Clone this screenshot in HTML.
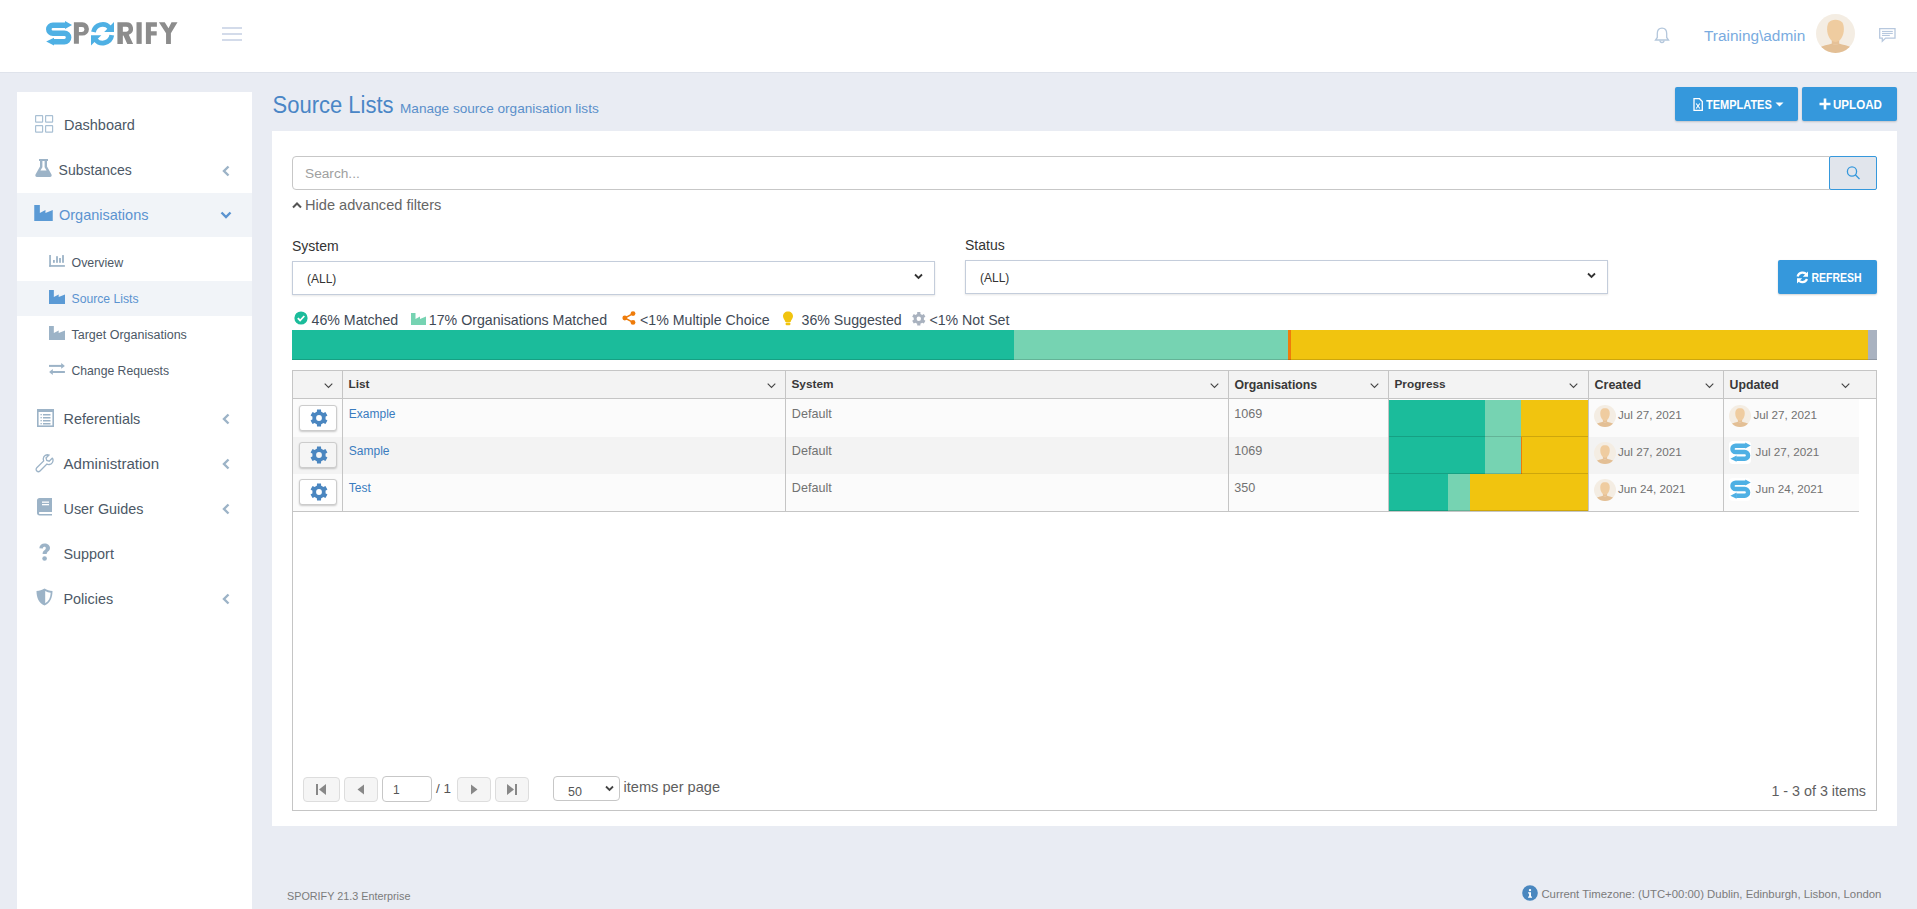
<!DOCTYPE html>
<html><head><meta charset="utf-8"><title>Source Lists</title>
<style>
html,body{margin:0;padding:0;width:1917px;height:909px;overflow:hidden;background:#e9ecf3;font-family:"Liberation Sans", sans-serif;}
div,svg{box-sizing:border-box;}
</style></head><body>
<div style="position:absolute;left:0px;top:0px;width:1917px;height:72px;background:#fff"></div><div style="position:absolute;left:0px;top:72px;width:1917px;height:1px;background:#dfe3eb"></div><svg style="position:absolute;left:46px;top:21px;" width="132" height="26" viewBox="0 0 132 26">
<path d="M20.5 4.2 H6.85 A4.05 4.05 0 0 0 6.85 12.3 H18.4 A4.2 4.2 0 0 1 18.4 20.7 H7.5" fill="none" stroke="#4eb0e4" stroke-width="5.6"/>
<polygon points="19,0.1 26,4.1 19,7.9" fill="#4eb0e4"/>
<polygon points="8,16.7 0.2,20.6 8,24.5" fill="#4eb0e4"/>
<path fill-rule="evenodd" fill="#8c8c8c" d="M27.9 1.3 H36.3 A6.65 6.65 0 0 1 36.3 14.6 H32.9 V22.8 H27.9 Z M32.9 6 V10.9 H36 A2.45 2.45 0 0 0 36 6 Z"/>
<path d="M47.47 10.93 A9.3 9.3 0 0 1 63.7 6.7" fill="none" stroke="#4eb0e4" stroke-width="4.8"/>
<polygon points="68,1 68,10.9 58.2,10.9" fill="#4eb0e4"/>
<path d="M65.78 14.2 A9.3 9.3 0 0 1 49.48 18.68" fill="none" stroke="#4eb0e4" stroke-width="4.8"/>
<polygon points="45,14.2 45,24.6 55.3,14.2" fill="#4eb0e4"/>
<path fill-rule="evenodd" fill="#8c8c8c" d="M71.4 1.2 H80.5 A6.5 6.5 0 0 1 82.8 13.8 L87.1 22.9 H81.3 L77.4 14.6 H76.85 V22.9 H71.4 Z M76.85 5.85 V10.7 H80.3 A2.4 2.4 0 0 0 80.3 5.85 Z"/>
<rect x="90.5" y="1.2" width="5.2" height="21.7" fill="#8c8c8c"/>
<path fill="#8c8c8c" d="M99.9 1.2 H110.9 V5.85 H104.9 V10.15 H110.7 V14.45 H104.9 V22.9 H99.9 Z"/>
<path fill="#8c8c8c" d="M112.95 1.2 H118.75 L122.5 7.35 L125.5 1.2 H131.5 L124.9 12.2 V22.9 H120.06 V12.2 Z"/>
</svg><div style="position:absolute;left:222px;top:27px;width:20px;height:2px;background:#d3dbea"></div><div style="position:absolute;left:222px;top:33px;width:20px;height:2px;background:#d3dbea"></div><div style="position:absolute;left:222px;top:39px;width:20px;height:2px;background:#d3dbea"></div><svg style="position:absolute;left:1653px;top:26px;" width="18" height="18" viewBox="0 0 18 18"><path d="M9 2.2 C5.6 2.2 4.3 5 4.3 7.6 V11.5 L2.5 14 H15.5 L13.7 11.5 V7.6 C13.7 5 12.4 2.2 9 2.2 Z" fill="none" stroke="#b4c7dc" stroke-width="1.3"/><path d="M7 14.5 A2 2 0 0 0 11 14.5" fill="none" stroke="#b4c7dc" stroke-width="1.3"/></svg><div style="position:absolute;left:1704px;top:27.56px;font-size:15.4px;line-height:15.4px;color:#79abe0;font-weight:400;white-space:nowrap;">Training\admin</div><svg style="position:absolute;left:1816px;top:14px;" width="39" height="39" viewBox="0 0 40 40"><clipPath id="c181614"><circle cx="20" cy="20" r="20"/></clipPath>
<g clip-path="url(#c181614)"><rect width="40" height="40" fill="#f4ede3"/>
<path d="M2 35 C7 32.3 12.5 31.6 16.5 30.3 C18 31.6 22 31.6 23.5 30.3 C27.5 31.6 33 32.3 38 35 L38 40 H2 Z" fill="#e3bf95"/>
<path d="M16.2 25 H23.8 V30.4 C22 31.8 18 31.8 16.2 30.4 Z" fill="#e6c197"/>
<path d="M20 6 C13.6 6 11.4 9.6 11.4 15.6 C11.4 21.6 14.6 28.6 20 28.6 C25.4 28.6 28.6 21.6 28.6 15.6 C28.6 9.6 26.4 6 20 6 Z" fill="#efcca0"/></g></svg><svg style="position:absolute;left:1878px;top:27px;" width="20" height="17" viewBox="0 0 20 17"><path d="M1.7 1.7 H17 V11.1 H7.6 L4.3 14.3 V11.1 H1.7 Z" fill="none" stroke="#b7c8de" stroke-width="1.3"/><rect x="4" y="3.9" width="10.8" height="1.1" fill="#b7c8de"/><rect x="4" y="5.9" width="10.8" height="1.1" fill="#b7c8de"/><rect x="4" y="7.9" width="7.8" height="1.1" fill="#b7c8de"/></svg><div style="position:absolute;left:17px;top:92px;width:235px;height:817px;background:#fff"></div><div style="position:absolute;left:17px;top:193px;width:235px;height:44px;background:#f1f4f8"></div><div style="position:absolute;left:17px;top:281px;width:235px;height:35px;background:#f1f4f8"></div><svg style="position:absolute;left:35px;top:115px;" width="19" height="19" viewBox="0 0 19 19"><rect x="0.6" y="0.6" width="7" height="6.6" fill="none" stroke="#a9c0d4" stroke-width="1.2" rx="0.5"/><rect x="0.6" y="10.6" width="7" height="6.6" fill="none" stroke="#a9c0d4" stroke-width="1.2" rx="0.5"/><rect x="10.6" y="0.6" width="7" height="6.6" fill="none" stroke="#a9c0d4" stroke-width="1.2" rx="0.5"/><rect x="10.6" y="10.6" width="7" height="6.6" fill="none" stroke="#a9c0d4" stroke-width="1.2" rx="0.5"/></svg><div style="position:absolute;left:64px;top:118.03px;font-size:14.5px;line-height:14.5px;color:#4c5866;font-weight:400;white-space:nowrap;">Dashboard</div><svg style="position:absolute;left:35px;top:158px;" width="17" height="20" viewBox="0 0 17 20"><path d="M4 1 H13 V3 H12 V8.5 L16.5 16.5 C17 17.8 16.4 19 15 19 H2 C0.6 19 0 17.8 0.5 16.5 L5 8.5 V3 H4 Z" fill="#9cb3c7"/><path d="M7.4 3 V9.2 L5.4 12.6 H11.6 L9.6 9.2 V3 Z" fill="#fff"/></svg><div style="position:absolute;left:58.6px;top:162.65px;font-size:14.0px;line-height:14.0px;color:#4c5866;font-weight:400;white-space:nowrap;">Substances</div><svg style="position:absolute;left:221px;top:165px;" width="10" height="12" viewBox="0 0 10 12"><path d="M7.5 1.5 L3 6 L7.5 10.5" fill="none" stroke="#9cb3c7" stroke-width="2.4"/></svg><svg style="position:absolute;left:34px;top:205px;" width="19" height="16" viewBox="0 0 18.5 16"><path d="M0 0 H5.6 V7.9 L11.2 5 V7.9 L18.5 5 V16 H0 Z" fill="#5b9ad5"/></svg><div style="position:absolute;left:59px;top:207.63px;font-size:14.5px;line-height:14.5px;color:#5b93d0;font-weight:400;white-space:nowrap;">Organisations</div><svg style="position:absolute;left:220px;top:210px;" width="12" height="10" viewBox="0 0 12 10"><path d="M1.5 2.5 L6 7 L10.5 2.5" fill="none" stroke="#5b93d0" stroke-width="2.4"/></svg><svg style="position:absolute;left:49px;top:255px;" width="16" height="12" viewBox="0 0 16 12"><rect x="0.2" y="0" width="1.7" height="11.8" fill="#9cb3c7"/><rect x="0.2" y="10.1" width="15.7" height="1.7" fill="#9cb3c7"/><rect x="4" y="5" width="1.8" height="2.8" fill="#9cb3c7"/><rect x="7.1" y="1.2" width="1.8" height="6.6" fill="#9cb3c7"/><rect x="10.1" y="3" width="1.8" height="4.8" fill="#9cb3c7"/><rect x="13.1" y="0.1" width="1.8" height="7.7" fill="#9cb3c7"/></svg><div style="position:absolute;left:71.5px;top:256.50px;font-size:12.4px;line-height:12.4px;color:#4c5866;font-weight:400;white-space:nowrap;">Overview</div><svg style="position:absolute;left:49px;top:290px;" width="16" height="14" viewBox="0 0 18.5 16"><path d="M0 0 H5.6 V7.9 L11.2 5 V7.9 L18.5 5 V16 H0 Z" fill="#5b9ad5"/></svg><div style="position:absolute;left:71.5px;top:293.17px;font-size:12.2px;line-height:12.2px;color:#5b93d0;font-weight:400;white-space:nowrap;">Source Lists</div><svg style="position:absolute;left:49px;top:326px;" width="16" height="14" viewBox="0 0 18.5 16"><path d="M0 0 H5.6 V7.9 L11.2 5 V7.9 L18.5 5 V16 H0 Z" fill="#9cb3c7"/></svg><div style="position:absolute;left:71.5px;top:329.42px;font-size:12.5px;line-height:12.5px;color:#4c5866;font-weight:400;white-space:nowrap;">Target Organisations</div><svg style="position:absolute;left:49px;top:362px;" width="16" height="13" viewBox="0 0 16 13"><rect x="0" y="2.9" width="13" height="2" fill="#9cb3c7"/><path d="M12.2 1 L15.9 3.9 L12.2 6.8 Z" fill="#9cb3c7"/><rect x="3" y="9" width="12.9" height="2" fill="#9cb3c7"/><path d="M3.8 7.1 L0.1 10 L3.8 12.9 Z" fill="#9cb3c7"/></svg><div style="position:absolute;left:71.5px;top:364.67px;font-size:12.2px;line-height:12.2px;color:#4c5866;font-weight:400;white-space:nowrap;">Change Requests</div><svg style="position:absolute;left:37px;top:409px;" width="17" height="18" viewBox="0 0 17 18"><rect x="0.8" y="0.8" width="15.4" height="16.4" fill="none" stroke="#9cb3c7" stroke-width="1.6"/><rect x="0" y="0" width="17" height="3" fill="#9cb3c7"/><rect x="3.5" y="5" width="1.3" height="1.3" fill="#9cb3c7"/><rect x="6" y="5" width="7.5" height="1.5" fill="#9cb3c7"/><rect x="3.5" y="8" width="1.3" height="1.3" fill="#9cb3c7"/><rect x="6" y="8" width="7.5" height="1.5" fill="#9cb3c7"/><rect x="3.5" y="11" width="1.3" height="1.3" fill="#9cb3c7"/><rect x="6" y="11" width="7.5" height="1.5" fill="#9cb3c7"/><rect x="3.5" y="14" width="1.3" height="1.3" fill="#9cb3c7"/><rect x="6" y="14" width="7.5" height="1.5" fill="#9cb3c7"/></svg><div style="position:absolute;left:63.5px;top:411.81px;font-size:14.4px;line-height:14.4px;color:#4c5866;font-weight:400;white-space:nowrap;">Referentials</div><svg style="position:absolute;left:221px;top:413px;" width="10" height="12" viewBox="0 0 10 12"><path d="M7.5 1.5 L3 6 L7.5 10.5" fill="none" stroke="#9cb3c7" stroke-width="2.4"/></svg><svg style="position:absolute;left:35px;top:454px;" width="19" height="19" viewBox="0 0 19 19"><path d="M17.2 4.2 L14.2 7.2 L11.8 6.4 L11 4 L14 1 C11.5 0.2 8.6 1.6 8.3 4.5 C8.2 5.4 8.4 6.2 8.7 6.9 L1.8 13.8 C0.9 14.7 0.9 16.1 1.8 17 C2.7 17.9 4.1 17.9 5 17 L11.9 10.1 C12.6 10.4 13.4 10.6 14.3 10.5 C17.2 10.2 18.6 7.3 17.8 4.8 Z" fill="none" stroke="#9cb3c7" stroke-width="1.3"/></svg><div style="position:absolute;left:63.5px;top:456.22px;font-size:15.1px;line-height:15.1px;color:#4c5866;font-weight:400;white-space:nowrap;">Administration</div><svg style="position:absolute;left:221px;top:458px;" width="10" height="12" viewBox="0 0 10 12"><path d="M7.5 1.5 L3 6 L7.5 10.5" fill="none" stroke="#9cb3c7" stroke-width="2.4"/></svg><svg style="position:absolute;left:37px;top:498px;" width="16" height="18" viewBox="0 0 16 18"><path d="M2.5 0 H15 V14 H3 C2.2 14 2 14.5 2 15 C2 15.5 2.2 16 3 16 H15 V17.5 H2.5 C1 17.5 0 16.5 0 15 V2.5 C0 1 1 0 2.5 0 Z" fill="#9cb3c7"/><rect x="5" y="3.5" width="7" height="1.3" fill="#fff"/><rect x="5" y="6" width="7" height="1.3" fill="#fff"/></svg><div style="position:absolute;left:63.5px;top:501.81px;font-size:14.4px;line-height:14.4px;color:#4c5866;font-weight:400;white-space:nowrap;">User Guides</div><svg style="position:absolute;left:221px;top:503px;" width="10" height="12" viewBox="0 0 10 12"><path d="M7.5 1.5 L3 6 L7.5 10.5" fill="none" stroke="#9cb3c7" stroke-width="2.4"/></svg><svg style="position:absolute;left:38px;top:543px;" width="13" height="18" viewBox="0 0 13 18"><path d="M1.3 5.2 C1.5 2.2 3.7 0.5 6.6 0.5 C9.6 0.5 12 2.3 12 5 C12 8.2 8.7 8.5 8.7 11 H4.6 C4.6 7.3 7.8 7 7.8 5.2 C7.8 4.3 7.2 3.8 6.4 3.8 C5.4 3.8 4.9 4.5 4.8 5.6 Z" fill="#9cb3c7"/><circle cx="6.6" cy="15.5" r="2.3" fill="#9cb3c7"/></svg><div style="position:absolute;left:63.5px;top:546.81px;font-size:14.4px;line-height:14.4px;color:#4c5866;font-weight:400;white-space:nowrap;">Support</div><svg style="position:absolute;left:36px;top:588px;" width="17" height="18" viewBox="0 0 17 18"><path d="M8.5 0.5 C11 2 13.5 2.8 16.5 3 C16.5 10 14 15 8.5 17.5 C3 15 0.5 10 0.5 3 C3.5 2.8 6 2 8.5 0.5 Z" fill="#9cb3c7"/><path d="M9.2 3 C11 4 12.7 4.6 14.7 4.8 C14.5 10 12.7 13.5 9.2 15.3 Z" fill="#fff"/></svg><div style="position:absolute;left:63.5px;top:591.81px;font-size:14.4px;line-height:14.4px;color:#4c5866;font-weight:400;white-space:nowrap;">Policies</div><svg style="position:absolute;left:221px;top:593px;" width="10" height="12" viewBox="0 0 10 12"><path d="M7.5 1.5 L3 6 L7.5 10.5" fill="none" stroke="#9cb3c7" stroke-width="2.4"/></svg><div style="position:absolute;left:272.5px;top:94.88px;font-size:22px;line-height:22px;color:#4a86c6;font-weight:400;white-space:nowrap;transform:scaleY(1.1);transform-origin:0 84.65%">Source Lists</div><div style="position:absolute;left:400px;top:101.69px;font-size:13.6px;line-height:13.6px;color:#5a8fca;font-weight:400;white-space:nowrap;">Manage source organisation lists</div><div style="position:absolute;left:1675px;top:87px;width:123px;height:34px;background:#3598dc;border-radius:2px;box-shadow:0 1px 2px rgba(0,0,0,.18)"></div><div style="position:absolute;left:1802px;top:87px;width:95px;height:34px;background:#3598dc;border-radius:2px;box-shadow:0 1px 2px rgba(0,0,0,.18)"></div><svg style="position:absolute;left:1693px;top:98px;" width="10" height="13" viewBox="0 0 10 13"><path d="M1 0.7 H6.5 L9.3 3.5 V12.3 H1 Z" fill="none" stroke="#fff" stroke-width="1.3"/><path d="M3.2 5.5 L6.8 10.5 M6.8 5.5 L3.2 10.5" stroke="#fff" stroke-width="1.1"/></svg><div style="position:absolute;left:1706px;top:100.09px;font-size:11.0px;line-height:11.0px;color:#fff;font-weight:700;white-space:nowrap;transform:scaleY(1.13);transform-origin:0 84.65%">TEMPLATES</div><svg style="position:absolute;left:1775px;top:102px;" width="9" height="6" viewBox="0 0 9 6"><path d="M0.5 0.5 H8.5 L4.5 4.5 Z" fill="#fff"/></svg><svg style="position:absolute;left:1819px;top:98px;" width="12" height="12" viewBox="0 0 12 12"><path d="M6 0.5 V11.5 M0.5 6 H11.5" stroke="#fff" stroke-width="2.6"/></svg><div style="position:absolute;left:1833px;top:98.98px;font-size:11.6px;line-height:11.6px;color:#fff;font-weight:700;white-space:nowrap;transform:scaleY(1.13);transform-origin:0 84.65%">UPLOAD</div><div style="position:absolute;left:272px;top:131px;width:1625px;height:695px;background:#fff"></div><div style="position:absolute;left:292px;top:156px;width:1538px;height:34px;border:1px solid #c7c7c7;border-radius:4px 0 0 4px;background:#fff"></div><div style="position:absolute;left:1829px;top:156px;width:48px;height:34px;border:1px solid #3598dc;border-radius:2px;background:#e1e5ec"></div><svg style="position:absolute;left:1846px;top:166px;" width="15" height="15" viewBox="0 0 15 15"><circle cx="6" cy="5.5" r="4.6" fill="none" stroke="#3598dc" stroke-width="1.3"/><path d="M9.3 8.8 L13.5 13" stroke="#3598dc" stroke-width="1.3"/></svg><div style="position:absolute;left:305px;top:167.40px;font-size:13.7px;line-height:13.7px;color:#a0a0a0;font-weight:400;white-space:nowrap;">Search...</div><svg style="position:absolute;left:292px;top:201px;" width="10" height="8" viewBox="0 0 10 8"><path d="M1 6.5 L5 2.5 L9 6.5" fill="none" stroke="#555" stroke-width="2"/></svg><div style="position:absolute;left:305px;top:198.34px;font-size:14.6px;line-height:14.6px;color:#666;font-weight:400;white-space:nowrap;">Hide advanced filters</div><div style="position:absolute;left:292px;top:239.15px;font-size:14px;line-height:14px;color:#333;font-weight:400;white-space:nowrap;">System</div><div style="position:absolute;left:292px;top:261px;width:643px;height:34px;border:1px solid #c4cddb;background:#fff;box-shadow:0 1px 2px rgba(0,0,0,.1)"></div><div style="position:absolute;left:307px;top:272.84px;font-size:12px;line-height:12px;color:#333;font-weight:400;white-space:nowrap;">(ALL)</div><svg style="position:absolute;left:914px;top:273px;" width="9" height="7" viewBox="0 0 9 7"><path d="M1 1.5 L4.5 5 L8 1.5" fill="none" stroke="#333" stroke-width="1.8"/></svg><div style="position:absolute;left:965px;top:238.35px;font-size:14px;line-height:14px;color:#333;font-weight:400;white-space:nowrap;">Status</div><div style="position:absolute;left:965px;top:260px;width:643px;height:34px;border:1px solid #c4cddb;background:#fff;box-shadow:0 1px 2px rgba(0,0,0,.1)"></div><div style="position:absolute;left:980px;top:272.34px;font-size:12px;line-height:12px;color:#333;font-weight:400;white-space:nowrap;">(ALL)</div><svg style="position:absolute;left:1587px;top:272px;" width="9" height="7" viewBox="0 0 9 7"><path d="M1 1.5 L4.5 5 L8 1.5" fill="none" stroke="#333" stroke-width="1.8"/></svg><div style="position:absolute;left:1778px;top:260px;width:99px;height:34px;background:#3598dc;border-radius:2px;box-shadow:0 1px 2px rgba(0,0,0,.18)"></div><svg style="position:absolute;left:1795.5px;top:271px;" width="13" height="13" viewBox="0 0 13 13"><path d="M11 4.5 A5 5 0 0 0 1.6 5.6" fill="none" stroke="#fff" stroke-width="2.2"/><path d="M12 0.5 V5.8 H6.8 Z" fill="#fff"/><path d="M2 8.5 A5 5 0 0 0 11 8" fill="none" stroke="#fff" stroke-width="2.2"/><path d="M1 12.5 V7.2 H6.2 Z" fill="#fff"/></svg><div style="position:absolute;left:1811.5px;top:273.11px;font-size:10.5px;line-height:10.5px;color:#fff;font-weight:700;white-space:nowrap;transform:scaleY(1.13);transform-origin:0 84.65%">REFRESH</div><svg style="position:absolute;left:294px;top:311px;" width="14" height="14" viewBox="0 0 14 14"><circle cx="7" cy="7" r="6.6" fill="#1bbc9b"/><path d="M3.8 7.2 L6.1 9.5 L10.3 5" fill="none" stroke="#fff" stroke-width="1.8"/></svg><div style="position:absolute;left:311.5px;top:312.98px;font-size:14.2px;line-height:14.2px;color:#3f4a56;font-weight:400;white-space:nowrap;">46% Matched</div><svg style="position:absolute;left:411px;top:313px;" width="15" height="12" viewBox="0 0 15 12"><path d="M0 0 H4.5 V6 L9 3.5 V6 L15 3.5 V12 H0 Z" fill="#76d3b2"/></svg><div style="position:absolute;left:428.8px;top:312.98px;font-size:14.2px;line-height:14.2px;color:#3f4a56;font-weight:400;white-space:nowrap;">17% Organisations Matched</div><svg style="position:absolute;left:622px;top:311px;" width="14" height="14" viewBox="0 0 14 14"><circle cx="11" cy="2.6" r="2.4" fill="#ee7c0b"/><circle cx="2.8" cy="7" r="2.4" fill="#ee7c0b"/><circle cx="11" cy="11.4" r="2.4" fill="#ee7c0b"/><path d="M11 2.6 L2.8 7 L11 11.4" fill="none" stroke="#ee7c0b" stroke-width="1.5"/></svg><div style="position:absolute;left:640px;top:312.98px;font-size:14.2px;line-height:14.2px;color:#3f4a56;font-weight:400;white-space:nowrap;">&lt;1% Multiple Choice</div><svg style="position:absolute;left:782px;top:311px;" width="12" height="15" viewBox="0 0 12 15"><path d="M6 0.5 C9 0.5 11 2.6 11 5.3 C11 7.7 9 8.8 8.6 11 H3.4 C3 8.8 1 7.7 1 5.3 C1 2.6 3 0.5 6 0.5 Z" fill="#f1c40f"/><rect x="3.6" y="11.6" width="4.8" height="2.6" rx="1" fill="#f1c40f"/></svg><div style="position:absolute;left:801.5px;top:312.98px;font-size:14.2px;line-height:14.2px;color:#3f4a56;font-weight:400;white-space:nowrap;">36% Suggested</div><svg style="position:absolute;left:911px;top:311px;" width="15" height="15" viewBox="0 0 15 15"><path fill-rule="evenodd" fill="#a9b2bf" d="M6.14 2.98 L6.25 1.08 L9.35 1.08 L9.46 2.98 L9.91 3.16 L10.35 3.38 L10.76 3.65 L11.15 3.95 L12.85 3.09 L14.40 5.78 L12.81 6.83 L12.88 7.31 L12.90 7.80 L12.88 8.29 L12.81 8.77 L14.40 9.82 L12.85 12.51 L11.15 11.65 L10.76 11.95 L10.35 12.22 L9.91 12.44 L9.46 12.62 L9.35 14.52 L6.25 14.52 L6.14 12.62 L5.69 12.44 L5.25 12.22 L4.84 11.95 L4.45 11.65 L2.75 12.51 L1.20 9.82 L2.79 8.77 L2.72 8.29 L2.70 7.80 L2.72 7.31 L2.79 6.83 L1.20 5.78 L2.75 3.09 L4.45 3.95 L4.84 3.65 L5.25 3.38 L5.69 3.16 Z M7.80 5.60 A2.2 2.2 0 1 0 7.80 10.00 A2.2 2.2 0 1 0 7.80 5.60 Z"/></svg><div style="position:absolute;left:929.4px;top:312.98px;font-size:14.2px;line-height:14.2px;color:#3f4a56;font-weight:400;white-space:nowrap;">&lt;1% Not Set</div><div style="position:absolute;left:292px;top:330px;width:722px;height:30px;background:#1bbc9b"></div><div style="position:absolute;left:1014px;top:330px;width:274px;height:30px;background:#76d3b2"></div><div style="position:absolute;left:1288px;top:330px;width:3px;height:30px;background:#ee7c0b"></div><div style="position:absolute;left:1291px;top:330px;width:577px;height:30px;background:#f1c40f"></div><div style="position:absolute;left:1868px;top:330px;width:9px;height:30px;background:#a9b2c0"></div><div style="position:absolute;left:292px;top:359px;width:1585px;height:1px;background:rgba(0,0,0,.15)"></div><div style="position:absolute;left:292px;top:370px;width:1585px;height:441px;border:1px solid #c5c5c5;background:#fff"></div><div style="position:absolute;left:293px;top:371px;width:1583px;height:27px;background:#f3f3f3"></div><div style="position:absolute;left:293px;top:398px;width:1583px;height:1px;background:#c5c5c5"></div><div style="position:absolute;left:342px;top:371px;width:1px;height:27px;background:#c5c5c5"></div><div style="position:absolute;left:785px;top:371px;width:1px;height:27px;background:#c5c5c5"></div><div style="position:absolute;left:1228px;top:371px;width:1px;height:27px;background:#c5c5c5"></div><div style="position:absolute;left:1388px;top:371px;width:1px;height:27px;background:#c5c5c5"></div><div style="position:absolute;left:1588px;top:371px;width:1px;height:27px;background:#c5c5c5"></div><div style="position:absolute;left:1723px;top:371px;width:1px;height:27px;background:#c5c5c5"></div><div style="position:absolute;left:348.5px;top:379.21px;font-size:11.8px;line-height:11.8px;color:#383838;font-weight:700;white-space:nowrap;">List</div><div style="position:absolute;left:791.5px;top:379.21px;font-size:11.8px;line-height:11.8px;color:#383838;font-weight:700;white-space:nowrap;">System</div><div style="position:absolute;left:1234.5px;top:378.79px;font-size:12.3px;line-height:12.3px;color:#383838;font-weight:700;white-space:nowrap;">Organisations</div><div style="position:absolute;left:1394.5px;top:379.21px;font-size:11.8px;line-height:11.8px;color:#383838;font-weight:700;white-space:nowrap;">Progress</div><div style="position:absolute;left:1594.5px;top:378.62px;font-size:12.5px;line-height:12.5px;color:#383838;font-weight:700;white-space:nowrap;">Created</div><div style="position:absolute;left:1729.5px;top:378.79px;font-size:12.3px;line-height:12.3px;color:#383838;font-weight:700;white-space:nowrap;">Updated</div><svg style="position:absolute;left:323.5px;top:383px;" width="9" height="6" viewBox="0 0 9 6"><path d="M0.7 0.7 L4.5 4.5 L8.3 0.7" fill="none" stroke="#444" stroke-width="1.1"/></svg><svg style="position:absolute;left:766.5px;top:383px;" width="9" height="6" viewBox="0 0 9 6"><path d="M0.7 0.7 L4.5 4.5 L8.3 0.7" fill="none" stroke="#444" stroke-width="1.1"/></svg><svg style="position:absolute;left:1209.5px;top:383px;" width="9" height="6" viewBox="0 0 9 6"><path d="M0.7 0.7 L4.5 4.5 L8.3 0.7" fill="none" stroke="#444" stroke-width="1.1"/></svg><svg style="position:absolute;left:1369.5px;top:383px;" width="9" height="6" viewBox="0 0 9 6"><path d="M0.7 0.7 L4.5 4.5 L8.3 0.7" fill="none" stroke="#444" stroke-width="1.1"/></svg><svg style="position:absolute;left:1569px;top:383px;" width="9" height="6" viewBox="0 0 9 6"><path d="M0.7 0.7 L4.5 4.5 L8.3 0.7" fill="none" stroke="#444" stroke-width="1.1"/></svg><svg style="position:absolute;left:1704.5px;top:383px;" width="9" height="6" viewBox="0 0 9 6"><path d="M0.7 0.7 L4.5 4.5 L8.3 0.7" fill="none" stroke="#444" stroke-width="1.1"/></svg><svg style="position:absolute;left:1840.5px;top:383px;" width="9" height="6" viewBox="0 0 9 6"><path d="M0.7 0.7 L4.5 4.5 L8.3 0.7" fill="none" stroke="#444" stroke-width="1.1"/></svg><div style="position:absolute;left:293px;top:399px;width:1566px;height:38px;background:#fbfbfb"></div><div style="position:absolute;left:342px;top:399px;width:1px;height:38px;background:#c5c5c5"></div><div style="position:absolute;left:785px;top:399px;width:1px;height:38px;background:#c5c5c5"></div><div style="position:absolute;left:1228px;top:399px;width:1px;height:38px;background:#c5c5c5"></div><div style="position:absolute;left:1388px;top:399px;width:1px;height:38px;background:#c5c5c5"></div><div style="position:absolute;left:1588px;top:399px;width:1px;height:38px;background:#c5c5c5"></div><div style="position:absolute;left:1723px;top:399px;width:1px;height:38px;background:#c5c5c5"></div><div style="position:absolute;left:299px;top:405px;width:38px;height:26px;background:#fff;border:1px solid #ccc;border-radius:3px;box-shadow:0 1px 2px rgba(0,0,0,.2)"></div><svg style="position:absolute;left:310px;top:409px;" width="18" height="18" viewBox="0 0 18 18"><path fill-rule="evenodd" fill="#4a86c0" d="M6.85 2.76 L7.02 0.43 L10.98 0.43 L11.15 2.76 L11.74 2.99 L12.30 3.28 L12.83 3.63 L13.33 4.02 L15.44 3.00 L17.42 6.43 L15.48 7.74 L15.57 8.37 L15.60 9.00 L15.57 9.63 L15.48 10.26 L17.42 11.57 L15.44 15.00 L13.33 13.98 L12.83 14.37 L12.30 14.72 L11.74 15.01 L11.15 15.24 L10.98 17.57 L7.02 17.57 L6.85 15.24 L6.26 15.01 L5.70 14.72 L5.17 14.37 L4.67 13.98 L2.56 15.00 L0.58 11.57 L2.52 10.26 L2.43 9.63 L2.40 9.00 L2.43 8.37 L2.52 7.74 L0.58 6.43 L2.56 3.00 L4.67 4.02 L5.17 3.63 L5.70 3.28 L6.26 2.99 Z M9.00 6.10 A2.9 2.9 0 1 0 9.00 11.90 A2.9 2.9 0 1 0 9.00 6.10 Z"/></svg><div style="position:absolute;left:348.8px;top:407.64px;font-size:12px;line-height:12px;color:#3a7cbf;font-weight:400;white-space:nowrap;">Example</div><div style="position:absolute;left:791.8px;top:408.13px;font-size:12.6px;line-height:12.6px;color:#727272;font-weight:400;white-space:nowrap;">Default</div><div style="position:absolute;left:1234.3px;top:408.13px;font-size:12.6px;line-height:12.6px;color:#727272;font-weight:400;white-space:nowrap;">1069</div><div style="position:absolute;left:1389px;top:400px;width:96px;height:37px;background:#1bbc9b"></div><div style="position:absolute;left:1485px;top:400px;width:36px;height:37px;background:#76d3b2"></div><div style="position:absolute;left:1521px;top:400px;width:67px;height:37px;background:#f1c40f"></div><div style="position:absolute;left:1389px;top:436px;width:199px;height:1px;background:rgba(0,0,0,.15)"></div><svg style="position:absolute;left:1594px;top:405px;" width="22" height="22" viewBox="0 0 40 40"><clipPath id="c1594405"><circle cx="20" cy="20" r="20"/></clipPath>
<g clip-path="url(#c1594405)"><rect width="40" height="40" fill="#f4ede3"/>
<path d="M2 35 C7 32.3 12.5 31.6 16.5 30.3 C18 31.6 22 31.6 23.5 30.3 C27.5 31.6 33 32.3 38 35 L38 40 H2 Z" fill="#e3bf95"/>
<path d="M16.2 25 H23.8 V30.4 C22 31.8 18 31.8 16.2 30.4 Z" fill="#e6c197"/>
<path d="M20 6 C13.6 6 11.4 9.6 11.4 15.6 C11.4 21.6 14.6 28.6 20 28.6 C25.4 28.6 28.6 21.6 28.6 15.6 C28.6 9.6 26.4 6 20 6 Z" fill="#efcca0"/></g></svg><div style="position:absolute;left:1618px;top:409.30px;font-size:11.7px;line-height:11.7px;color:#727272;font-weight:400;white-space:nowrap;">Jul 27, 2021</div><svg style="position:absolute;left:1729px;top:405px;" width="22" height="22" viewBox="0 0 40 40"><clipPath id="c1729405"><circle cx="20" cy="20" r="20"/></clipPath>
<g clip-path="url(#c1729405)"><rect width="40" height="40" fill="#f4ede3"/>
<path d="M2 35 C7 32.3 12.5 31.6 16.5 30.3 C18 31.6 22 31.6 23.5 30.3 C27.5 31.6 33 32.3 38 35 L38 40 H2 Z" fill="#e3bf95"/>
<path d="M16.2 25 H23.8 V30.4 C22 31.8 18 31.8 16.2 30.4 Z" fill="#e6c197"/>
<path d="M20 6 C13.6 6 11.4 9.6 11.4 15.6 C11.4 21.6 14.6 28.6 20 28.6 C25.4 28.6 28.6 21.6 28.6 15.6 C28.6 9.6 26.4 6 20 6 Z" fill="#efcca0"/></g></svg><div style="position:absolute;left:1753.4px;top:409.30px;font-size:11.7px;line-height:11.7px;color:#727272;font-weight:400;white-space:nowrap;">Jul 27, 2021</div><div style="position:absolute;left:293px;top:437px;width:1566px;height:37px;background:#f3f3f3"></div><div style="position:absolute;left:342px;top:437px;width:1px;height:37px;background:#c5c5c5"></div><div style="position:absolute;left:785px;top:437px;width:1px;height:37px;background:#c5c5c5"></div><div style="position:absolute;left:1228px;top:437px;width:1px;height:37px;background:#c5c5c5"></div><div style="position:absolute;left:1388px;top:437px;width:1px;height:37px;background:#c5c5c5"></div><div style="position:absolute;left:1588px;top:437px;width:1px;height:37px;background:#c5c5c5"></div><div style="position:absolute;left:1723px;top:437px;width:1px;height:37px;background:#c5c5c5"></div><div style="position:absolute;left:299px;top:442px;width:38px;height:26px;background:#f5f5f5;border:1px solid #ccc;border-radius:3px;box-shadow:0 1px 2px rgba(0,0,0,.2)"></div><svg style="position:absolute;left:310px;top:446px;" width="18" height="18" viewBox="0 0 18 18"><path fill-rule="evenodd" fill="#4a86c0" d="M6.85 2.76 L7.02 0.43 L10.98 0.43 L11.15 2.76 L11.74 2.99 L12.30 3.28 L12.83 3.63 L13.33 4.02 L15.44 3.00 L17.42 6.43 L15.48 7.74 L15.57 8.37 L15.60 9.00 L15.57 9.63 L15.48 10.26 L17.42 11.57 L15.44 15.00 L13.33 13.98 L12.83 14.37 L12.30 14.72 L11.74 15.01 L11.15 15.24 L10.98 17.57 L7.02 17.57 L6.85 15.24 L6.26 15.01 L5.70 14.72 L5.17 14.37 L4.67 13.98 L2.56 15.00 L0.58 11.57 L2.52 10.26 L2.43 9.63 L2.40 9.00 L2.43 8.37 L2.52 7.74 L0.58 6.43 L2.56 3.00 L4.67 4.02 L5.17 3.63 L5.70 3.28 L6.26 2.99 Z M9.00 6.10 A2.9 2.9 0 1 0 9.00 11.90 A2.9 2.9 0 1 0 9.00 6.10 Z"/></svg><div style="position:absolute;left:348.8px;top:444.64px;font-size:12px;line-height:12px;color:#3a7cbf;font-weight:400;white-space:nowrap;">Sample</div><div style="position:absolute;left:791.8px;top:445.13px;font-size:12.6px;line-height:12.6px;color:#727272;font-weight:400;white-space:nowrap;">Default</div><div style="position:absolute;left:1234.3px;top:445.13px;font-size:12.6px;line-height:12.6px;color:#727272;font-weight:400;white-space:nowrap;">1069</div><div style="position:absolute;left:1389px;top:437px;width:96px;height:37px;background:#1bbc9b"></div><div style="position:absolute;left:1485px;top:437px;width:36px;height:37px;background:#76d3b2"></div><div style="position:absolute;left:1521px;top:437px;width:1px;height:37px;background:#ee7c0b"></div><div style="position:absolute;left:1522px;top:437px;width:66px;height:37px;background:#f1c40f"></div><div style="position:absolute;left:1389px;top:473px;width:199px;height:1px;background:rgba(0,0,0,.15)"></div><svg style="position:absolute;left:1594px;top:442px;" width="22" height="22" viewBox="0 0 40 40"><clipPath id="c1594442"><circle cx="20" cy="20" r="20"/></clipPath>
<g clip-path="url(#c1594442)"><rect width="40" height="40" fill="#f4ede3"/>
<path d="M2 35 C7 32.3 12.5 31.6 16.5 30.3 C18 31.6 22 31.6 23.5 30.3 C27.5 31.6 33 32.3 38 35 L38 40 H2 Z" fill="#e3bf95"/>
<path d="M16.2 25 H23.8 V30.4 C22 31.8 18 31.8 16.2 30.4 Z" fill="#e6c197"/>
<path d="M20 6 C13.6 6 11.4 9.6 11.4 15.6 C11.4 21.6 14.6 28.6 20 28.6 C25.4 28.6 28.6 21.6 28.6 15.6 C28.6 9.6 26.4 6 20 6 Z" fill="#efcca0"/></g></svg><div style="position:absolute;left:1618px;top:446.30px;font-size:11.7px;line-height:11.7px;color:#727272;font-weight:400;white-space:nowrap;">Jul 27, 2021</div><div style="position:absolute;left:1729px;top:441px;width:22px;height:23px;background:#fff;border-radius:4px"></div><svg style="position:absolute;left:1729.5px;top:442.2px;overflow:visible" width="21" height="20" viewBox="-0.3 -0.3 26.6 25"><path d="M20.5 4.2 H6.85 A4.05 4.05 0 0 0 6.85 12.3 H18.4 A4.2 4.2 0 0 1 18.4 20.7 H7.5" fill="none" stroke="#4eb0e4" stroke-width="5.6"/>
<polygon points="19,0.1 26,4.1 19,7.9" fill="#4eb0e4"/><polygon points="8,16.7 0.2,20.6 8,24.5" fill="#4eb0e4"/></svg><div style="position:absolute;left:1755.6px;top:446.30px;font-size:11.7px;line-height:11.7px;color:#727272;font-weight:400;white-space:nowrap;">Jul 27, 2021</div><div style="position:absolute;left:293px;top:474px;width:1566px;height:37px;background:#fbfbfb"></div><div style="position:absolute;left:292px;top:511px;width:1567px;height:1px;background:#c5c5c5"></div><div style="position:absolute;left:342px;top:474px;width:1px;height:37px;background:#c5c5c5"></div><div style="position:absolute;left:785px;top:474px;width:1px;height:37px;background:#c5c5c5"></div><div style="position:absolute;left:1228px;top:474px;width:1px;height:37px;background:#c5c5c5"></div><div style="position:absolute;left:1388px;top:474px;width:1px;height:37px;background:#c5c5c5"></div><div style="position:absolute;left:1588px;top:474px;width:1px;height:37px;background:#c5c5c5"></div><div style="position:absolute;left:1723px;top:474px;width:1px;height:37px;background:#c5c5c5"></div><div style="position:absolute;left:299px;top:479px;width:38px;height:26px;background:#fff;border:1px solid #ccc;border-radius:3px;box-shadow:0 1px 2px rgba(0,0,0,.2)"></div><svg style="position:absolute;left:310px;top:483px;" width="18" height="18" viewBox="0 0 18 18"><path fill-rule="evenodd" fill="#4a86c0" d="M6.85 2.76 L7.02 0.43 L10.98 0.43 L11.15 2.76 L11.74 2.99 L12.30 3.28 L12.83 3.63 L13.33 4.02 L15.44 3.00 L17.42 6.43 L15.48 7.74 L15.57 8.37 L15.60 9.00 L15.57 9.63 L15.48 10.26 L17.42 11.57 L15.44 15.00 L13.33 13.98 L12.83 14.37 L12.30 14.72 L11.74 15.01 L11.15 15.24 L10.98 17.57 L7.02 17.57 L6.85 15.24 L6.26 15.01 L5.70 14.72 L5.17 14.37 L4.67 13.98 L2.56 15.00 L0.58 11.57 L2.52 10.26 L2.43 9.63 L2.40 9.00 L2.43 8.37 L2.52 7.74 L0.58 6.43 L2.56 3.00 L4.67 4.02 L5.17 3.63 L5.70 3.28 L6.26 2.99 Z M9.00 6.10 A2.9 2.9 0 1 0 9.00 11.90 A2.9 2.9 0 1 0 9.00 6.10 Z"/></svg><div style="position:absolute;left:348.8px;top:481.64px;font-size:12px;line-height:12px;color:#3a7cbf;font-weight:400;white-space:nowrap;">Test</div><div style="position:absolute;left:791.8px;top:482.13px;font-size:12.6px;line-height:12.6px;color:#727272;font-weight:400;white-space:nowrap;">Default</div><div style="position:absolute;left:1234.3px;top:482.13px;font-size:12.6px;line-height:12.6px;color:#727272;font-weight:400;white-space:nowrap;">350</div><div style="position:absolute;left:1389px;top:474px;width:59px;height:37px;background:#1bbc9b"></div><div style="position:absolute;left:1448px;top:474px;width:22px;height:37px;background:#76d3b2"></div><div style="position:absolute;left:1470px;top:474px;width:118px;height:37px;background:#f1c40f"></div><div style="position:absolute;left:1389px;top:510px;width:199px;height:1px;background:rgba(0,0,0,.15)"></div><svg style="position:absolute;left:1594px;top:479px;" width="22" height="22" viewBox="0 0 40 40"><clipPath id="c1594479"><circle cx="20" cy="20" r="20"/></clipPath>
<g clip-path="url(#c1594479)"><rect width="40" height="40" fill="#f4ede3"/>
<path d="M2 35 C7 32.3 12.5 31.6 16.5 30.3 C18 31.6 22 31.6 23.5 30.3 C27.5 31.6 33 32.3 38 35 L38 40 H2 Z" fill="#e3bf95"/>
<path d="M16.2 25 H23.8 V30.4 C22 31.8 18 31.8 16.2 30.4 Z" fill="#e6c197"/>
<path d="M20 6 C13.6 6 11.4 9.6 11.4 15.6 C11.4 21.6 14.6 28.6 20 28.6 C25.4 28.6 28.6 21.6 28.6 15.6 C28.6 9.6 26.4 6 20 6 Z" fill="#efcca0"/></g></svg><div style="position:absolute;left:1618px;top:483.30px;font-size:11.7px;line-height:11.7px;color:#727272;font-weight:400;white-space:nowrap;">Jun 24, 2021</div><div style="position:absolute;left:1729px;top:478px;width:22px;height:23px;background:#fff;border-radius:4px"></div><svg style="position:absolute;left:1729.5px;top:479.2px;overflow:visible" width="21" height="20" viewBox="-0.3 -0.3 26.6 25"><path d="M20.5 4.2 H6.85 A4.05 4.05 0 0 0 6.85 12.3 H18.4 A4.2 4.2 0 0 1 18.4 20.7 H7.5" fill="none" stroke="#4eb0e4" stroke-width="5.6"/>
<polygon points="19,0.1 26,4.1 19,7.9" fill="#4eb0e4"/><polygon points="8,16.7 0.2,20.6 8,24.5" fill="#4eb0e4"/></svg><div style="position:absolute;left:1755.6px;top:483.30px;font-size:11.7px;line-height:11.7px;color:#727272;font-weight:400;white-space:nowrap;">Jun 24, 2021</div><div style="position:absolute;left:303px;top:777px;width:37px;height:25px;background:#f5f5f5;border:1px solid #ddd;border-radius:4px"></div><svg style="position:absolute;left:314px;top:783px;" width="14" height="13" viewBox="0 0 14 13"><rect x="2" y="1" width="2" height="11" fill="#888"/><path d="M12 1 V12 L5 6.5 Z" fill="#888"/></svg><div style="position:absolute;left:344px;top:777px;width:34px;height:25px;background:#f5f5f5;border:1px solid #ddd;border-radius:4px"></div><svg style="position:absolute;left:354px;top:783px;" width="14" height="13" viewBox="0 0 14 13"><path d="M10 1.5 V11.5 L3.5 6.5 Z" fill="#888"/></svg><div style="position:absolute;left:382px;top:776px;width:50px;height:26px;background:#fff;border:1px solid #c7c7c7;border-radius:4px"></div><div style="position:absolute;left:393px;top:783.54px;font-size:12px;line-height:12px;color:#555;font-weight:400;white-space:nowrap;">1</div><div style="position:absolute;left:436px;top:782.07px;font-size:13.5px;line-height:13.5px;color:#555;font-weight:400;white-space:nowrap;">/ 1</div><div style="position:absolute;left:457px;top:777px;width:34px;height:25px;background:#f5f5f5;border:1px solid #ddd;border-radius:4px"></div><svg style="position:absolute;left:467px;top:783px;" width="14" height="13" viewBox="0 0 14 13"><path d="M4 1.5 V11.5 L10.5 6.5 Z" fill="#888"/></svg><div style="position:absolute;left:495px;top:777px;width:34px;height:25px;background:#f5f5f5;border:1px solid #ddd;border-radius:4px"></div><svg style="position:absolute;left:505px;top:783px;" width="14" height="13" viewBox="0 0 14 13"><path d="M2 1 V12 L9 6.5 Z" fill="#888"/><rect x="10" y="1" width="2" height="11" fill="#888"/></svg><div style="position:absolute;left:553px;top:776px;width:67px;height:25px;background:#fff;border:1px solid #c7c7c7;border-radius:4px"></div><div style="position:absolute;left:568px;top:786.42px;font-size:12.5px;line-height:12.5px;color:#555;font-weight:400;white-space:nowrap;">50</div><svg style="position:absolute;left:604.5px;top:785px;" width="9" height="7" viewBox="0 0 9 7"><path d="M1 1.5 L4.5 5 L8 1.5" fill="none" stroke="#444" stroke-width="1.8"/></svg><div style="position:absolute;left:623.5px;top:780.24px;font-size:14.6px;line-height:14.6px;color:#5e5e5e;font-weight:400;white-space:nowrap;">items per page</div><div style="position:absolute;right:51px;top:783.70px;font-size:14.3px;line-height:14.3px;color:#5e5e5e;font-weight:400;white-space:nowrap;">1 - 3 of 3 items</div><div style="position:absolute;left:287px;top:891.36px;font-size:10.8px;line-height:10.8px;color:#7b7b7b;font-weight:400;white-space:nowrap;">SPORIFY 21.3 Enterprise</div><svg style="position:absolute;left:1522px;top:885px;" width="16" height="16" viewBox="0 0 16 16"><circle cx="8" cy="8" r="7.8" fill="#4a87bf"/><path d="M6.1 7.3 H9 V11.5 H10 V12.7 H6.1 V11.5 H7.1 V8.5 H6.1 Z" fill="#fff"/><circle cx="8" cy="5.1" r="1.2" fill="#fff"/></svg><div style="position:absolute;left:1541.4px;top:889.38px;font-size:11.36px;line-height:11.36px;color:#7b7b7b;font-weight:400;white-space:nowrap;">Current Timezone: (UTC+00:00) Dublin, Edinburgh, Lisbon, London</div>
</body></html>
